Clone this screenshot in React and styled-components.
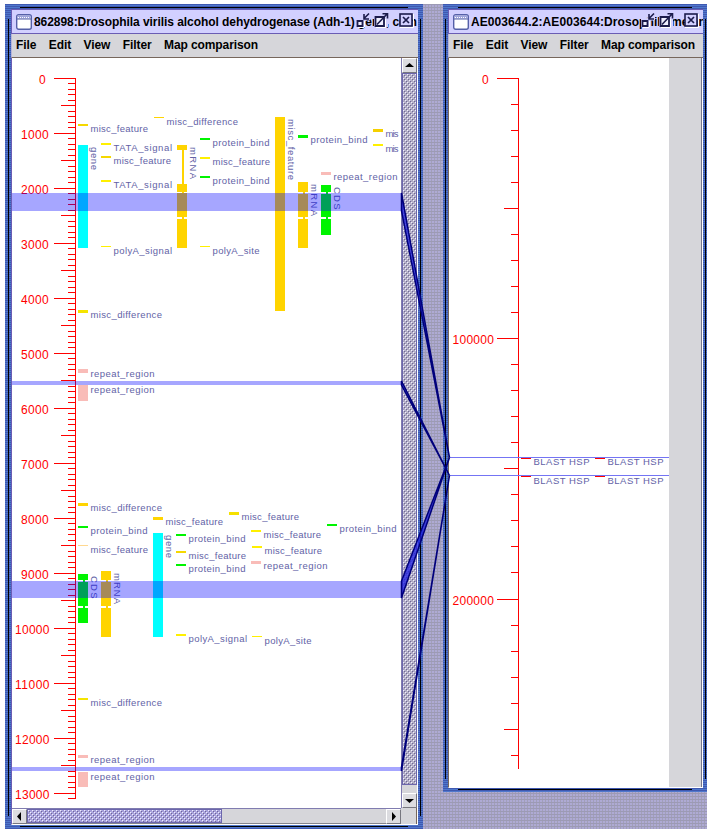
import React from "react";
import styled, { createGlobalStyle, css } from "styled-components";

const Global = createGlobalStyle`
  body { margin: 0; background: #fff; font-family: "Liberation Sans", Arial, sans-serif; }
`;

const Desktop = styled.div`
  position: relative;
  display: flex;
  justify-content: space-between;
  align-items: flex-start;
  width: 702px;
  height: 825px;
  margin: 4px 0 0 5px;
  background:
    linear-gradient(#9c9ab4 1px, transparent 1px) 0 0 / 3px 3px,
    linear-gradient(90deg, #a29fb8 1px, transparent 1px) 0 0 / 3px 3px,
    #aeaad4;
  overflow: hidden;
`;

const WindowFrame = styled.section`
  box-sizing: border-box;
  display: flex;
  flex-direction: column;
  width: ${(p) => p.$width}px;
  height: ${(p) => p.$height}px;
  padding: ${(p) => p.$pad};
  background:
    linear-gradient(#000, #000) 15px 3px / calc(100% - 30px) 1px no-repeat,
    linear-gradient(#000, #000) 15px calc(100% - 2px) / calc(100% - 30px) 1px no-repeat,
    linear-gradient(#000, #000) ${(p) => p.$inset}px 15px / 1px calc(100% - 28px) no-repeat,
    linear-gradient(#000, #000) calc(100% - ${(p) => p.$insetRight}px) 15px / 1px calc(100% - 28px) no-repeat,
    linear-gradient(#3f58b0 1px, transparent 1px) 0 0 / 2px 2px,
    #4f78cc;
`;

const TitleBar = styled.header`
  box-sizing: border-box;
  position: relative;
  display: flex;
  align-items: center;
  flex: none;
  height: 25px;
  padding-left: 4px;
  border: 1px solid #6a5cb4;
  border-right: 0;
  background: #d2d0ff;
  overflow: hidden;
`;

const TitleText = styled.span`
  margin-left: 2px;
  font-size: 12px;
  font-weight: bold;
  line-height: 22px;
  letter-spacing: ${(p) => p.$spacing}px;
  white-space: pre;
  color: #000;
`;

const WindowButtons = styled.div`
  position: absolute;
  top: 2px;
  right: ${(p) => p.$right}px;
  display: flex;
`;

const ButtonIcon = styled.svg`
  width: 16px;
  height: 16px;
  margin-right: ${(p) => p.$gap}px;
`;

const FrameIcon = styled.svg`
  flex: none;
  width: 16px;
  height: 16px;
`;

const MenuBar = styled.nav`
  box-sizing: border-box;
  display: flex;
  flex: none;
  gap: 12.5px;
  height: 24px;
  padding: 0 0 0 4px;
  border-left: 1px solid #b8b4d8;
  border-bottom: 1px solid #77675c;
  background: #d6d6da;
`;

const MenuItem = styled.span`
  font-size: 12px;
  font-weight: bold;
  line-height: 23px;
  letter-spacing: -0.1px;
  white-space: nowrap;
`;

const ScrollPane = styled.div`
  display: grid;
  grid-template-columns: 389px 16px;
  grid-template-rows: 750px 16px;
  width: 405px;
  border-left: 1px solid #6a5cb4;
  border-right: 1px solid #fff;
  border-bottom: 1px solid #fff;
  background: #fff;
`;

const bumps = css`
  background:
    linear-gradient(135deg, #f0eeff 1px, transparent 1.5px) 0 0 / 4px 4px,
    linear-gradient(135deg, #f0eeff 1px, transparent 1.5px) 2px 2px / 4px 4px,
    linear-gradient(135deg, #6f6698 1px, transparent 1.5px) 1px 1px / 4px 4px,
    linear-gradient(135deg, #6f6698 1px, transparent 1.5px) 3px 3px / 4px 4px,
    ${(p) => (p.$vertical ? "#b4b0c6" : "#aaa4e0")};
`;

const ScrollBar = styled.div`
  box-sizing: border-box;
  display: flex;
  flex-direction: ${(p) => (p.$vertical ? "column" : "row")};
  background: #d6d6da;
  ${(p) =>
    p.$vertical
      ? "border-left: 1px solid #807cb0;"
      : "border-top: 1px solid #807cb0; border-bottom: 1px solid #85858c;"}
`;

const ScrollArrow = styled.svg`
  flex: none;
  box-sizing: border-box;
  width: 15px;
  height: 15px;
  background: #dcdce0;
  border: 1px solid #77777f;
  border-top-color: #fff;
  border-left-color: #fff;
`;

const ScrollThumb = styled.div`
  ${bumps}
  box-sizing: border-box;
  border: 1px solid #6c66ac;
  flex: none;
  ${(p) => (p.$vertical ? `height:${p.$size}px;` : `width:${p.$size}px;`)}
`;

const Track = styled.div`
  flex: 1;
`;

const Corner = styled.div`
  background: #d6d6da;
  border-right: 1px solid #77675c;
`;

const MapBody = styled.div`
  box-sizing: border-box;
  display: flex;
  width: 255px;
  height: 730px;
  border-left: 1px solid #77675c;
  border-right: 1px solid #fff;
  border-bottom: 1px solid #fff;
  background: #fff;
`;

const Filler = styled.div`
  flex: 1;
  box-sizing: border-box;
  border-right: 1px solid #77778c;
  background: #d6d6da;
`;

const MapCanvas = styled.svg`
  display: block;
  flex: none;
  overflow: hidden;
  background: #fff;
`;

const AxisText = styled.text`
  font: 12px "Liberation Sans", Arial, sans-serif;
  fill: #f00;
`;

const FeatureText = styled.text`
  font: 9.5px "Liberation Sans", Arial, sans-serif;
  fill: #6262a6;
`;

const LinkLayer = styled.svg`
  position: absolute;
  left: 0;
  top: 0;
  pointer-events: none;
`;

const GOLD = "#ffd400";
const YELLOW = "#fff000";
const GREEN = "#00f400";
const CYAN = "#00ffff";
const PINK = "#f9bcb8";

const WIDTHS = {
  misc_feature: 57.5,
  misc_difference: 71.5,
  TATA_signal: 58.5,
  protein_bind: 57,
  repeat_region: 64,
  polyA_signal: 58.5,
  polyA_site: 47,
  mis: 13,
  "BLAST HSP": 56,
};

// x, y, height, colour, label, label baseline
const FEATURES = [
  [78, 124, 2, "#f5d800", "misc_feature", 132],
  [154, 117, 1, GOLD, "misc_difference", 125],
  [101, 143, 2, YELLOW, "TATA_signal", 151],
  [101, 156, 2, "#f5d800", "misc_feature", 164],
  [101, 180, 2, YELLOW, "TATA_signal", 188],
  [200, 138, 2, GREEN, "protein_bind", 146],
  [200, 157, 2, YELLOW, "misc_feature", 165],
  [200, 176, 2, GREEN, "protein_bind", 184],
  [298, 135, 3, GREEN, "protein_bind", 143],
  [373, 129, 3, "#f5d000", "mis", 137],
  [373, 144, 2, YELLOW, "mis", 152],
  [321, 172, 3, PINK, "repeat_region", 180],
  [101, 246, 1, YELLOW, "polyA_signal", 254],
  [200, 246, 1, YELLOW, "polyA_site", 254],
  [78, 310, 3, "#f5e400", "misc_difference", 318],
  [78, 369, 4, PINK, "repeat_region", 377],
  [78, 385, 16, PINK, "repeat_region", 393],
  [78, 503, 3, GOLD, "misc_difference", 511],
  [78, 526, 2, GREEN, "protein_bind", 534],
  [78, 545, 1, "#ffd890", "misc_feature", 553],
  [153, 517, 3, GOLD, "misc_feature", 525],
  [229, 512, 3, "#f5e000", "misc_feature", 520],
  [176, 534, 1.5, GREEN, "protein_bind", 542],
  [176, 551, 2, "#f5d800", "misc_feature", 559],
  [176, 564, 2, GREEN, "protein_bind", 572],
  [251, 530, 2, YELLOW, "misc_feature", 538],
  [252, 546, 2, YELLOW, "misc_feature", 554],
  [251, 561, 3, PINK, "repeat_region", 569],
  [327, 524, 2, GREEN, "protein_bind", 532],
  [176, 634, 2, YELLOW, "polyA_signal", 642],
  [252, 636, 1, YELLOW, "polyA_site", 644],
  [78, 698, 2, "#f5e400", "misc_difference", 706],
  [78, 755, 3, PINK, "repeat_region", 763],
  [78, 772, 15, PINK, "repeat_region", 780],
];

// x, colour, exon blocks, label, label top, label length
const GENES = [
  [78, CYAN, [[145, 248]], "gene", 147, 23],
  [177, GOLD, [[145, 150], [184, 192], [193, 217], [219, 248]], "mRNA", 147, 32],
  [275, GOLD, [[117, 311]], "misc_feature", 119, 61],
  [298, GOLD, [[182, 192], [194, 217], [219, 248]], "mRNA", 184, 32],
  [321, GREEN, [[185, 192], [194, 217], [219, 235]], "CDS", 187, 22.5],
  [153, CYAN, [[533, 637]], "gene", 535, 23],
  [78, GREEN, [[574, 580], [582, 606], [608, 623]], "CDS", 576, 22.5],
  [101, GOLD, [[571, 580], [582, 606], [608, 637]], "mRNA", 573, 31],
];

const BANDS = [
  [193, 18],
  [381, 4],
  [581, 17],
  [767, 4],
];

const HSPS = [
  [521, 458, 465],
  [595, 458, 465],
  [521, 476, 484],
  [595, 476, 484],
];

function Axis({ x, end, step, count, unit, labelX }) {
  const ticks = Array.from({ length: count }, (_, i) => {
    const y = Math.floor(78 + i * step + 0.01);
    const len = i % 10 === 0 ? 21 : i % 5 === 0 ? 14 : 7;
    return <rect key={i} x={x - len} y={y} width={len} height="1" />;
  });
  const labels = [];
  for (let i = 0; i < count; i += 10) {
    const value = String(i * unit);
    labels.push(
      <AxisText
        key={i}
        x={labelX(value.length)}
        y={83.5 + i * step}
        textLength={value.length * 6.9}
      >
        {value}
      </AxisText>
    );
  }
  return (
    <g fill="#ff0000">
      <rect x={x} y="78" width="1" height={end - 78} />
      {ticks}
      {labels}
    </g>
  );
}

function Feature({ x, y, h, color, label, baseline }) {
  return (
    <g>
      <rect x={x} y={y} width="10" height={h} fill={color} />
      <FeatureText x={x + 12.5} y={baseline} textLength={WIDTHS[label]}>
        {label}
      </FeatureText>
    </g>
  );
}

function Gene({ x, color, blocks, label, top, length }) {
  const start = blocks[0][0];
  const end = blocks[blocks.length - 1][1];
  return (
    <g>
      <rect x={x + 5} y={start} width="2" height={end - start} fill={color} />
      {blocks.map(([a, b]) => (
        <rect key={a} x={x} y={a} width="10" height={b - a} fill={color} />
      ))}
      <FeatureText
        transform={`translate(${x + 13} ${top}) rotate(90)`}
        textLength={length}
      >
        {label}
      </FeatureText>
    </g>
  );
}

function TitleIcon() {
  return (
    <FrameIcon viewBox="0 0 16 16">
      <rect x="0.7" y="0.7" width="14.6" height="14.6" rx="2" fill="#fff" stroke="#5560a8" strokeWidth="1.4" />
      <rect x="1.5" y="1.5" width="13" height="3" fill="#9ea4dc" />
      <path d="M2 3.5h12" stroke="#fff" strokeDasharray="1 1" />
      <path d="M1 5h14" stroke="#5560a8" />
    </FrameIcon>
  );
}

function Buttons({ right }) {
  return (
    <WindowButtons $right={right}>
      <ButtonIcon $gap={2} viewBox="0 0 16 16">
        <path d="M1 7h6l1-6h7v7l-5 1v6H1z" fill="#d2d0ff" />
        <path d="M9 15.5H3M9.5 9v6" stroke="#fff" />
        <path d="M2.5 9h5v5h-5z" fill="#eeeeff" stroke="#1c1c4c" strokeWidth="1.8" />
        <path d="M14 1.5L9.5 6M9 2v5H14" fill="none" stroke="#1c1c4c" strokeWidth="1.6" />
      </ButtonIcon>
      <ButtonIcon $gap={9} viewBox="0 0 16 16">
        <rect x="1" y="1" width="14" height="14" fill="#d2d0ff" />
        <path d="M12.5 7v8.5H3" fill="none" stroke="#fff" />
        <path d="M2.5 5h8.5v9H2.5z" fill="#eeeeff" stroke="#1c1c4c" strokeWidth="1.8" />
        <path d="M4 12.5L14 2M9.5 1.8H14.5V6.5" fill="none" stroke="#1c1c4c" strokeWidth="1.6" />
      </ButtonIcon>
      <ButtonIcon $gap={0} viewBox="0 0 16 16">
        <rect x="2" y="2" width="12" height="12" fill="#d2d0ff" stroke="#1c1c4c" strokeWidth="1.6" />
        <path d="M5 5l6 6M11 5L5 11" stroke="#1c1c4c" strokeWidth="1.7" />
        <path d="M15.5 2v13.5H2" fill="none" stroke="#fff" />
      </ButtonIcon>
    </WindowButtons>
  );
}

function Menu() {
  return (
    <MenuBar>
      {["File", "Edit", "View", "Filter", "Map comparison"].map((name) => (
        <MenuItem key={name}>{name}</MenuItem>
      ))}
    </MenuBar>
  );
}

function Arrow({ d }) {
  return (
    <ScrollArrow viewBox="0 0 13 13">
      <path d={d} fill="#000" />
    </ScrollArrow>
  );
}

function VirilisMap() {
  return (
    <MapCanvas width="389" height="750" viewBox="12 58 389 750" shapeRendering="crispEdges">
      <Axis
        x={75}
        end={799}
        step={5.5}
        count={132}
        unit={100}
        labelX={(n) => (n === 1 ? 39 : n === 4 ? 21 : 15)}
      />
      {FEATURES.map(([x, y, h, color, label, baseline]) => (
        <Feature key={`${x}-${y}`} {...{ x, y, h, color, label, baseline }} />
      ))}
      {GENES.map(([x, color, blocks, label, top, length]) => (
        <Gene key={`${x}-${top}`} {...{ x, color, blocks, label, top, length }} />
      ))}
      {BANDS.map(([y, h]) => (
        <rect key={y} x="12" y={y} width="389" height={h} fill="#0000ff" opacity="0.35" />
      ))}
    </MapCanvas>
  );
}

function GenomeMap() {
  return (
    <MapCanvas width="220" height="728" viewBox="449 58 220 728" shapeRendering="crispEdges">
      <Axis
        x={518}
        end={769}
        step={26.05}
        count={27}
        unit={10000}
        labelX={(n) => (n === 1 ? 482 : 452.5)}
      />
      <rect x="449" y="457" width="220" height="1" fill="#7474f4" />
      <rect x="449" y="475" width="220" height="1" fill="#7474f4" />
      {HSPS.map(([x, y, baseline]) => (
        <Feature key={`${x}-${y}`} x={x} y={y} h={1} color="#ff0000" label="BLAST HSP" baseline={baseline} />
      ))}
    </MapCanvas>
  );
}

export default function App() {
  return (
    <>
      <Global />
      <Desktop>
        <WindowFrame $width={418} $height={825} $pad="5px 5px 3px 6px" $inset={3} $insetRight={2}>
          <TitleBar>
            <TitleIcon />
            <TitleText $spacing={-0.06}>
              862898:Drosophila virilis alcohol dehydrogenase (Adh-1) gene, com
            </TitleText>
            <Buttons right={4} />
          </TitleBar>
          <Menu />
          <ScrollPane>
            <VirilisMap />
            <ScrollBar $vertical>
              <Arrow d="M2 8h9L6.5 4z" />
              <ScrollThumb $vertical $size={712} />
              <Track />
              <Arrow d="M2 5h9L6.5 9z" />
            </ScrollBar>
            <ScrollBar>
              <Arrow d="M8 2v9L4 6.5z" />
              <ScrollThumb $size={195} />
              <Track />
              <Arrow d="M5 2v9L9 6.5z" />
            </ScrollBar>
            <Corner />
          </ScrollPane>
        </WindowFrame>
        <WindowFrame $width={264} $height={788} $pad="5px 4px 4px 5px" $inset={2} $insetRight={1}>
          <TitleBar>
            <TitleIcon />
            <TitleText $spacing={0.08}>AE003644.2:AE003644:Drosophila melan</TitleText>
            <Buttons right={4} />
          </TitleBar>
          <Menu />
          <MapBody>
            <GenomeMap />
            <Filler />
          </MapBody>
        </WindowFrame>
        <LinkLayer width="702" height="825" viewBox="5 4 702 825">
          <g fill="#1c1ce0" fillOpacity="0.75" stroke="#00007c" strokeWidth="1.5">
            <path d="M401.5 193L449.5 457.5L401.5 211z" />
            <path d="M401.5 381L449.5 475.5L401.5 385z" />
            <path d="M401.5 581L449.5 457.5L401.5 598z" />
            <path d="M401.5 767L449.5 475.5L401.5 771z" />
          </g>
        </LinkLayer>
      </Desktop>
    </>
  );
}
